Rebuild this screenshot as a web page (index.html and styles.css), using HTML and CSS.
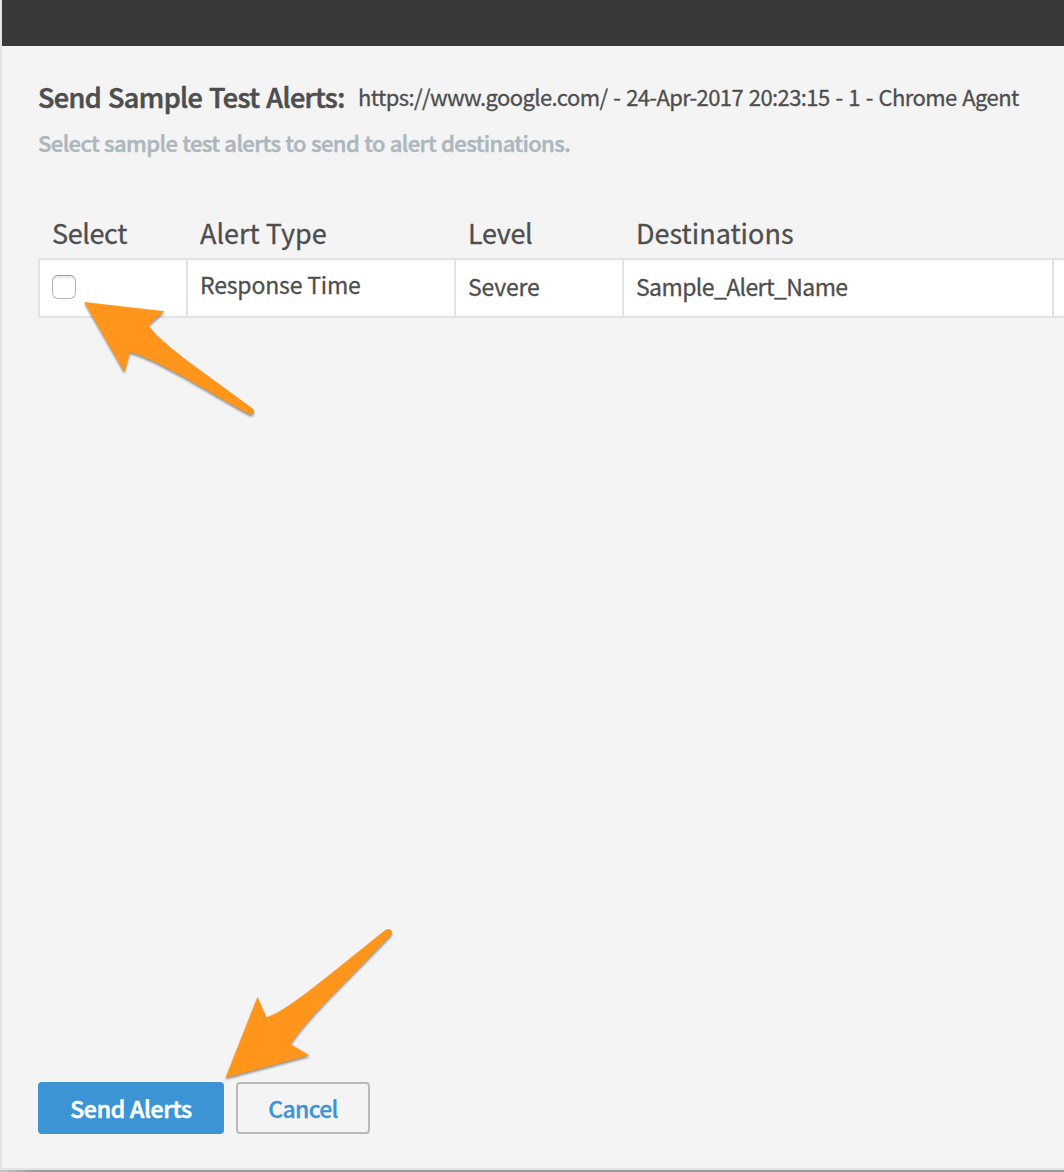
FILE: index.html
```html
<!DOCTYPE html>
<html lang="en">
<head>
<meta charset="utf-8">
<title>Send Sample Test Alerts</title>
<link rel="stylesheet" href="styles.css">
</head>
<body>
<main class="dialog">
  <div class="topbar"></div>
  <div class="content">
    <header class="heading">
      <h1 class="title">Send Sample Test Alerts:</h1>
      <span class="test-name">https://www.google.com/ - 24-Apr-2017 20:23:15 - 1 - Chrome Agent</span>
    </header>
    <p class="hint">Select sample test alerts to send to alert destinations.</p>
    <div class="table">
      <div class="row head">
        <span class="th th-select">Select</span>
        <span class="th th-type">Alert Type</span>
        <span class="th th-level">Level</span>
        <span class="th th-dest">Destinations</span>
      </div>
      <div class="row body">
        <div class="td"><input class="check" type="checkbox" aria-label="Response Time"></div>
        <div class="td td-type">Response Time</div>
        <div class="td td-level">Severe</div>
        <div class="td td-dest">Sample_Alert_Name</div>
        <div class="td"></div>
      </div>
    </div>
    <div class="actions">
      <button class="btn primary">Send Alerts</button>
      <button class="btn secondary">Cancel</button>
    </div>
  </div>
</main>
<div class="shadow-strip"></div>
<svg class="arrows" width="1064" height="1172" viewBox="0 0 1064 1172" aria-hidden="true">
  <path d="M84.2 302 L164.5 311.3 L148.5 325 C160 343 202 371 252.5 408.3 C255.8 411 253.5 416 249 414 C205 390 157 359 130 352.3 L124.4 372 Z"/>
  <path d="M225.6 1077.7 L257.5 997 L266.5 1017.2 C283 1014 328 976 386 929.6 C390 927.3 393.8 931.5 391.2 935 C342 986 303 1023 290.8 1044.3 L309.5 1055.2 Z"/>
</svg>
</body>
</html>
```
FILE: styles.css
```css
* { box-sizing: border-box; }
body {
  margin: 0;
  width: 1064px;
  height: 1172px;
  overflow: hidden;
  position: relative;
  background: #f4f4f4;
  color: #4e4e4e;
  font-family: "Noto Sans CJK SC", "Noto Sans", sans-serif;
  -webkit-text-stroke: 0.3px currentColor;
}
.dialog {
  display: flex;
  flex-direction: column;
  height: 1170px;
  border-left: 2px solid #e3e3e3;
  border-bottom: 2px solid #e3e3e3;
}
.topbar { height: 46px; background: #39393b; flex: none; }
.content {
  flex: 1;
  display: flex;
  flex-direction: column;
  padding: 32px 0 34px 36px;
}
.heading { display: flex; align-items: flex-start; height: 36px; white-space: nowrap; }
.title { margin: 0; width: 320px; font-size: 27px; line-height: 38px; font-weight: 500; letter-spacing: -0.6px; word-spacing: 1.4px; -webkit-text-stroke-width: 0.6px; }
.test-name { font-size: 22px; line-height: 36px; letter-spacing: -0.6px; word-spacing: 1.5px; }
.hint { margin: 13px 0 0; font-size: 22px; line-height: 30px; font-weight: 500; letter-spacing: -0.6px; word-spacing: 0.6px; color: #adb7be; white-space: nowrap; -webkit-text-stroke-width: 0.5px; }
.table { margin-top: 58px; }
.row { display: grid; grid-template-columns: 148px 268px 168px 430px 1fr; white-space: nowrap; }
.head { height: 43px; }
.th { font-size: 27px; line-height: 36px; padding-left: 14px; }
.th-select { letter-spacing: -0.4px; }
.th-level { letter-spacing: -0.3px; }
.body { height: 60px; border-top: 2px solid #e3e3e3; border-bottom: 2px solid #e3e3e3; }
.td { background: #fff; border-left: 2px solid #e3e3e3; padding: 10px 0 0 12px; font-size: 23px; line-height: 32px; letter-spacing: -0.17px; }
.td-type { padding-top: 8px; }
.td-dest { letter-spacing: -0.6px; }
.check {
  appearance: none;
  display: block;
  width: 24px;
  height: 24px;
  margin: 5px 0 0;
  border: 1.5px solid #b4b4b4;
  border-top-color: #999;
  border-radius: 6px;
  background: #fff;
  box-shadow: inset 0 2px 2px #e8e8e8;
}
.actions { display: flex; gap: 12px; margin-top: auto; }
.btn { height: 52px; padding: 0; border-radius: 4px; font-family: inherit; font-size: 23px; line-height: 48px; font-weight: 500; white-space: nowrap; }
.primary { width: 186px; border: 2px solid #3c94d5; background: #3c94d5; color: #fff; letter-spacing: -0.25px; -webkit-text-stroke: 0.6px #fff; }
.secondary { width: 134px; border: 2px solid #b9b9b9; background: #f4f4f4; color: #3c94d5; letter-spacing: -0.7px; }
.shadow-strip { height: 2px; background: linear-gradient(90deg, #c8c8c8, #999 36px); }
.arrows { position: absolute; left: 0; top: 0; pointer-events: none; fill: #ff951a; filter: drop-shadow(0 2px 1.2px rgba(0, 0, 0, .4)); -webkit-text-stroke: 0; }
```
